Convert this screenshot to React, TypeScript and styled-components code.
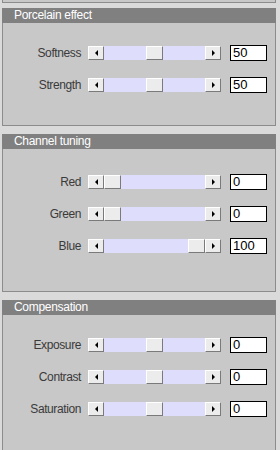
import React from "react";
import styled, { createGlobalStyle } from "styled-components";

const GlobalStyle = createGlobalStyle`
  html, body { margin: 0; padding: 0; background: #dadada; overflow: hidden; }
  body { font-family: "Liberation Sans", Arial, sans-serif; }
  * { box-sizing: border-box; }
`;

const Page = styled.div`
  width: 280px;
  display: flex;
  flex-direction: column;
  gap: 8px;
  padding-left: 2px;
`;

const PrevStub = styled.div`
  flex: 0 0 auto;
  width: 274px;
  height: 3px;
  margin-bottom: -3px;
  background: #c8c8c8;
  border: 1px solid #8c8c8c;
  border-top: none;
`;

const Panel = styled.section<{ $h: number }>`
  width: 274px;
  height: ${(p) => p.$h}px;
  flex: 0 0 auto;
  background: #c8c8c8;
  border: 1px solid #8c8c8c;
  border-top: none;
  display: flex;
  flex-direction: column;
`;

const Header = styled.div`
  height: 15px;
  margin: 0 -1px;
  background: #808080;
  color: #ffffff;
  font-size: 12px;
  line-height: 15px;
  padding-left: 12px;
  letter-spacing: -0.3px;
`;

const Rows = styled.div<{ $top: number }>`
  display: flex;
  flex-direction: column;
  gap: 16px;
  padding-top: ${(p) => p.$top}px;
`;

const Row = styled.div`
  display: flex;
  align-items: center;
  height: 16px;
`;

const Label = styled.div`
  width: 78px;
  text-align: right;
  font-size: 12px;
  color: #3a3a3a;
  letter-spacing: -0.4px;
  margin-right: 7px;
`;

const Slider = styled.div`
  display: flex;
  height: 14px;
  width: 133px;
  margin-right: 9px;
`;

const ArrowButton = styled.div`
  width: 16px;
  height: 14px;
  background: #ececec;
  border-top: 1px solid #ffffff;
  border-left: 1px solid #ffffff;
  border-right: 1px solid #7a7a7a;
  border-bottom: 1px solid #7a7a7a;
  display: flex;
  align-items: center;
  justify-content: center;
`;

const Track = styled.div`
  position: relative;
  flex: 1;
  height: 14px;
  background: #dedefc;
`;

const Thumb = styled.div`
  position: absolute;
  top: 0;
  width: 17px;
  height: 14px;
  background: #ececec;
  border-top: 1px solid #ffffff;
  border-left: 1px solid #ffffff;
  border-right: 1px solid #7a7a7a;
  border-bottom: 1px solid #7a7a7a;
`;

const Arrow = styled.div<{ $dir: "l" | "r" }>`
  width: 0;
  height: 0;
  border-top: 3px solid transparent;
  border-bottom: 3px solid transparent;
  ${(p) =>
    p.$dir === "l"
      ? "border-right: 3px solid #000;"
      : "border-left: 3px solid #000;"}
`;

const ValueBox = styled.div`
  width: 37px;
  height: 16px;
  background: #ffffff;
  border: 1px solid #000000;
  font-size: 13px;
  line-height: 14px;
  padding-left: 2px;
  color: #000;
`;

type Item = { label: string; value: number; min: number; max: number };

const SliderRow: React.FC<Item> = ({ label, value, min, max }) => {
  const trackW = 101;
  const thumbW = 17;
  const left = Math.round(((value - min) / (max - min)) * (trackW - thumbW));
  return (
    <Row>
      <Label>{label}</Label>
      <Slider>
        <ArrowButton>
          <Arrow $dir="l" />
        </ArrowButton>
        <Track>
          <Thumb style={{ left }} />
        </Track>
        <ArrowButton>
          <Arrow $dir="r" />
        </ArrowButton>
      </Slider>
      <ValueBox>{value}</ValueBox>
    </Row>
  );
};

const sections: { title: string; h: number; top: number; items: Item[] }[] = [
  {
    title: "Porcelain effect",
    h: 118,
    top: 22,
    items: [
      { label: "Softness", value: 50, min: 0, max: 100 },
      { label: "Strength", value: 50, min: 0, max: 100 },
    ],
  },
  {
    title: "Channel tuning",
    h: 158,
    top: 25,
    items: [
      { label: "Red", value: 0, min: 0, max: 100 },
      { label: "Green", value: 0, min: 0, max: 100 },
      { label: "Blue", value: 100, min: 0, max: 100 },
    ],
  },
  {
    title: "Compensation",
    h: 160,
    top: 22,
    items: [
      { label: "Exposure", value: 0, min: -100, max: 100 },
      { label: "Contrast", value: 0, min: -100, max: 100 },
      { label: "Saturation", value: 0, min: -100, max: 100 },
    ],
  },
];

export default function App() {
  return (
    <>
      <GlobalStyle />
      <Page>
        <PrevStub />
        {sections.map((s) => (
          <Panel key={s.title} $h={s.h}>
            <Header>{s.title}</Header>
            <Rows $top={s.top}>
              {s.items.map((it) => (
                <SliderRow key={it.label} {...it} />
              ))}
            </Rows>
          </Panel>
        ))}
      </Page>
    </>
  );
}
